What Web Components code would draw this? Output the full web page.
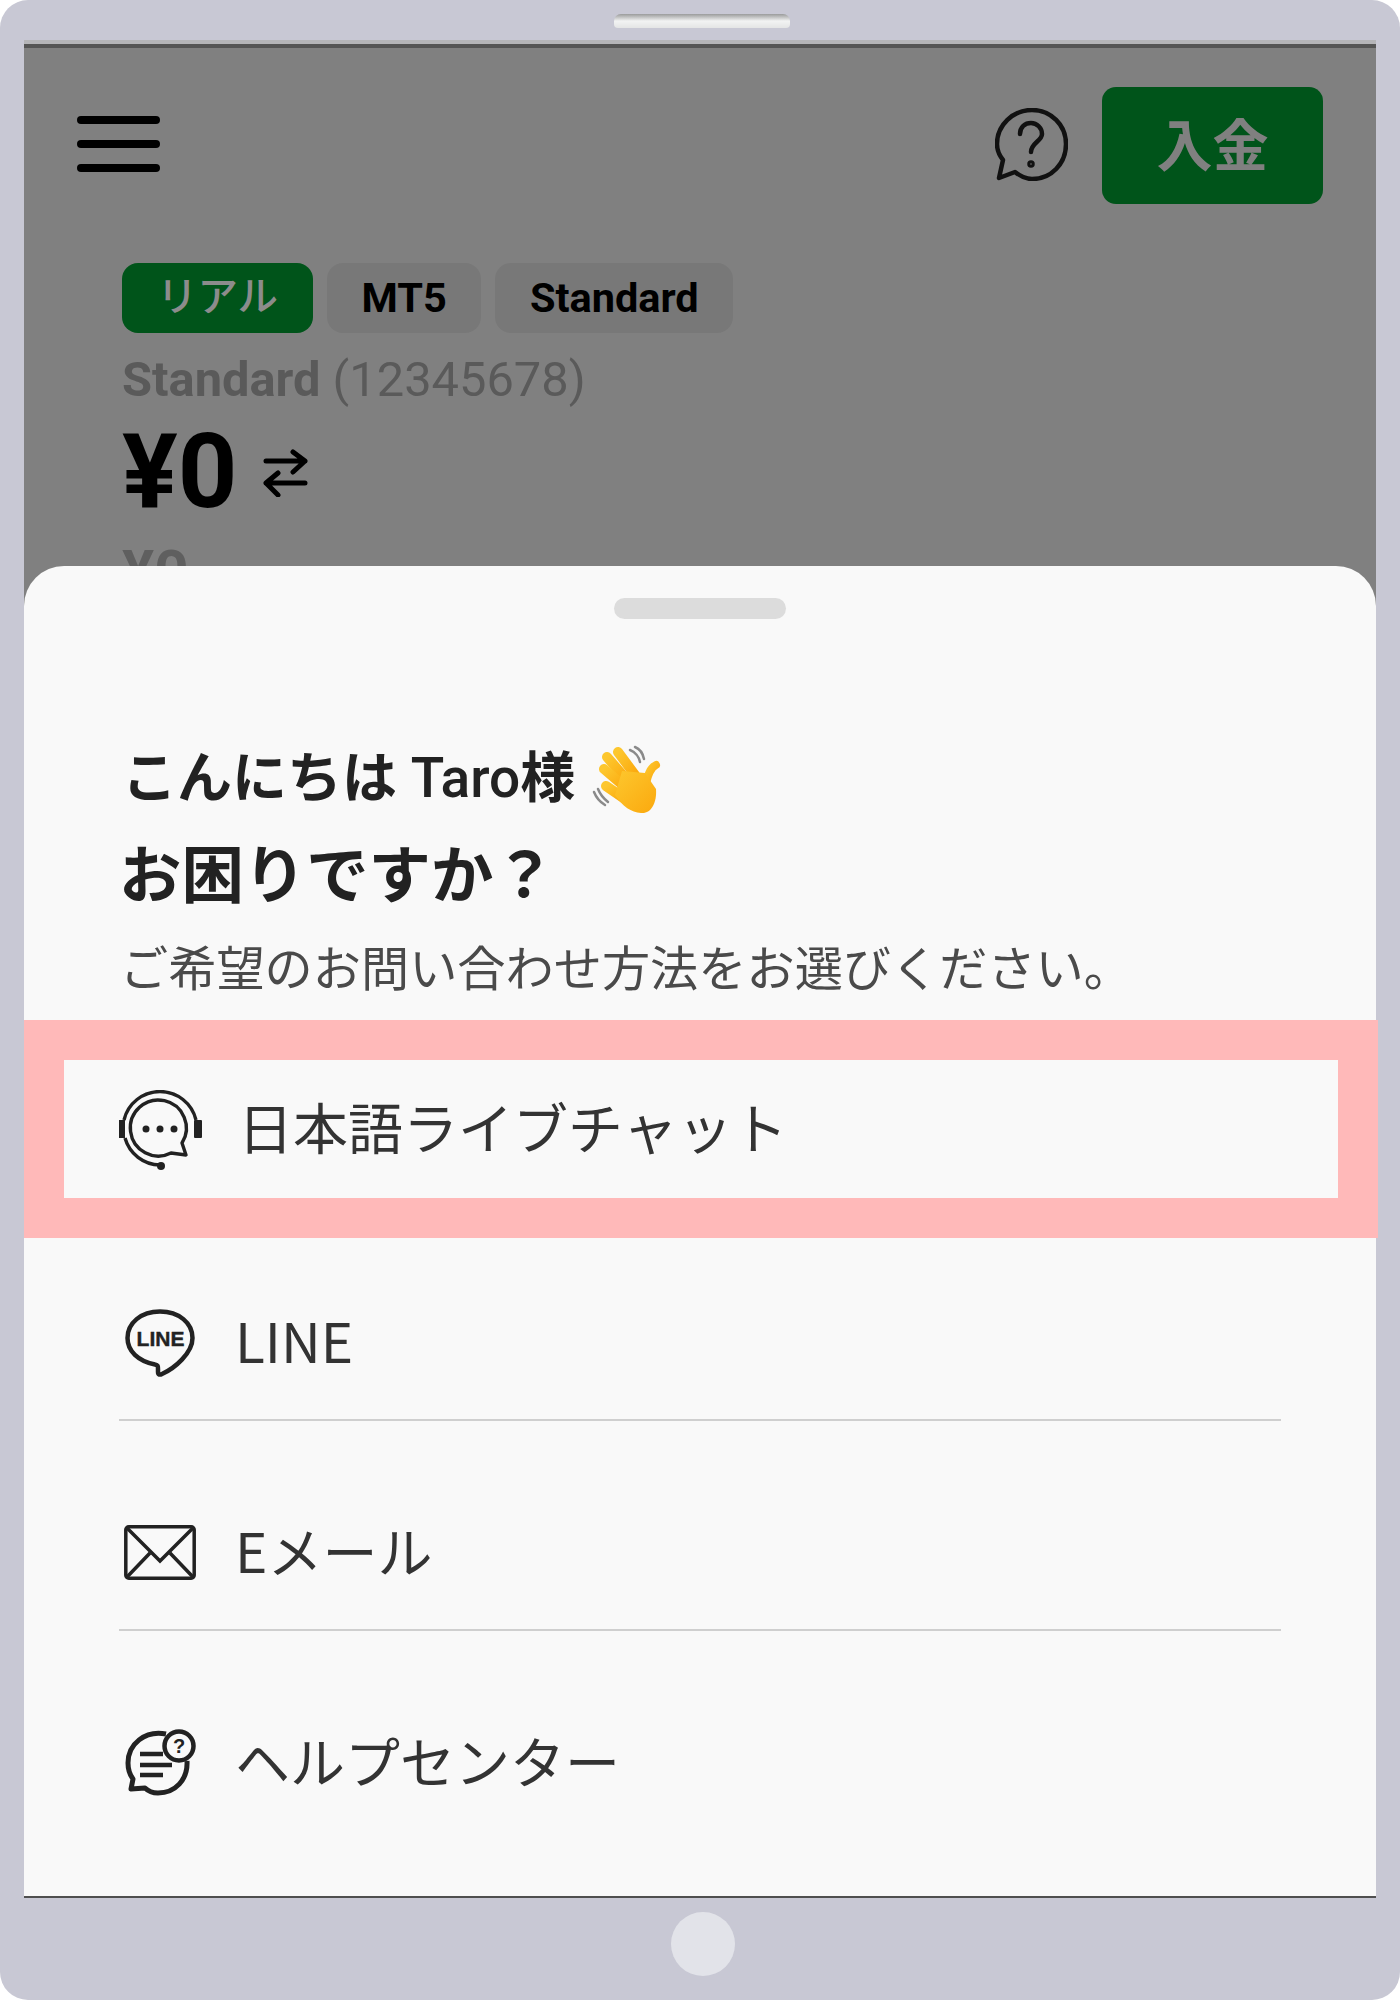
<!DOCTYPE html>
<html lang="ja">
<head>
<meta charset="utf-8">
<title>Support sheet</title>
<style>
  html, body { margin: 0; padding: 0; background: #fff; }
  body { font-family: "Noto Sans CJK JP", "Noto Sans", sans-serif; }
</style>
</head>
<body>
<device-frame>
  <account-panel slot="back"></account-panel>
  <support-sheet slot="front">
    <contact-row slot="rows" boxed label="日本語ライブチャット" icon="chat"></contact-row>
    <contact-row slot="rows" first label="LINE" icon="line"></contact-row>
    <contact-row slot="rows" label="Eメール" icon="mail"></contact-row>
    <contact-row slot="rows" plain label="ヘルプセンター" icon="help"></contact-row>
  </support-sheet>
</device-frame>

<script>
const ICONS = {
  chat: `<svg style="margin-top:2px" width="84" height="80" viewBox="0 0 84 80" fill="none" stroke="#222" stroke-width="3.400">
      <path d="M5 30A37 37 0 0 1 77 30"/>
      <path d="M6 48A37 37 0 0 0 41 75"/>
      <rect x="0" y="30" width="6" height="18" fill="#222" stroke="none"/>
      <rect x="75" y="30" width="8" height="18" rx="1" fill="#222" stroke="none"/>
      <circle cx="42" cy="76" r="4" fill="#222" stroke="none"/>
      <path d="M52 63A28 28 0 1 1 63 53L67 65Z" stroke-linejoin="round"/>
      <circle cx="27" cy="39" r="3.500" fill="#222" stroke="none"/>
      <circle cx="41" cy="39" r="3.500" fill="#222" stroke="none"/>
      <circle cx="55" cy="39" r="3.500" fill="#222" stroke="none"/>
    </svg>`,
  line: `<svg width="70" height="68" viewBox="0 0 70 68" fill="none" stroke="#222">
      <path d="M35 2.500C16 2.500 2.500 14 2.500 29C2.500 42 13 52 30 55.500C33 56 33 57 33 60L33 63C33 66 35 66 37 65C50 59 67.500 44 67.500 29C67.500 14 54 2.500 35 2.500Z" stroke-width="4.500" stroke-linejoin="round"/>
      <text x="35.500" y="37" text-anchor="middle" font-family="'Liberation Sans', sans-serif" font-weight="700" font-size="21" fill="#222" stroke="#222" stroke-width=".4">LINE</text>
    </svg>`,
  mail: `<svg style="margin-left:-1px" width="72" height="55" viewBox="0 0 72 55" fill="none" stroke="#222" stroke-width="3.500">
      <rect x="1.800" y="1.800" width="68.400" height="51.400" rx="3"/>
      <path d="M3 3L36 36L69 3"/>
      <path d="M3 52L26 28M69 52L46 28"/>
    </svg>`,
  help: `<svg width="72" height="68" viewBox="0 0 72 68" fill="none" stroke="#222" stroke-width="5" stroke-linejoin="round">
      <path d="M41 5C20 1 3 15 3 34C3 41 5 46 8 50L6 60L20 59C24 63 29 64 33 64C50 64 63 51 62 32"/>
      <circle cx="54" cy="17" r="14.500" stroke-width="4.500" fill="#f9f9f9"/>
      <path d="M15 25H38M15 36H47M15 46H38" stroke-width="4.500"/>
      <text x="54" y="24" text-anchor="middle" font-family="'Liberation Sans', sans-serif" font-weight="700" font-size="20" fill="#222" stroke="none">?</text>
    </svg>`
};

const frameTpl = document.createElement('template');
frameTpl.innerHTML = `
  <style>
    :host {
      display: block;
      width: 1400px;
      height: 2000px;
      box-sizing: border-box;
      padding: 40px 24px 0;
      background: #c8c8d4;
      border-radius: 28px;
      position: relative;
      overflow: hidden;
    }
    .notch {
      position: absolute;
      left: 614px;
      top: 14px;
      width: 176px;
      height: 14px;
      border-radius: 7px 7px 4px 4px;
      background: linear-gradient(#9a9b9b, #f2f3f3 50%, #e4e5e5);
    }
    .screen {
      height: 1858px;
      box-sizing: border-box;
      border-top: 4px solid #b5b5b8;
      border-bottom: 2px solid #4f4f4f;
      position: relative;
      background: #808080;
    }
    .screen::before {
      content: "";
      display: block;
      height: 4px;
      background: #555;
    }
    .home {
      position: absolute;
      left: 671px;
      top: 1912px;
      width: 64px;
      height: 64px;
      border-radius: 50%;
      background: #e2e3e9;
    }
  </style>
  <div class="notch"></div>
  <div class="screen">
    <slot name="back"></slot>
    <slot name="front"></slot>
  </div>
  <div class="home"></div>
`;
class DeviceFrame extends HTMLElement {
  constructor() {
    super();
    this.attachShadow({ mode: 'open' });
    this.shadowRoot.appendChild(frameTpl.content.cloneNode(true));
  }
}
customElements.define('device-frame', DeviceFrame);

const panelTpl = document.createElement('template');
panelTpl.innerHTML = `
  <style>
    :host {
      display: block;
      height: 518px;
      overflow: hidden;
      font-family: Roboto, "Noto Sans CJK JP", sans-serif;
      color: #000;
    }
    header {
      display: flex;
      align-items: center;
      padding: 39px 53px 0 53px;
      height: 117px;
    }
    .burger { display: flex; flex-direction: column; gap: 16px; width: 83px; margin-bottom: 3px; }
    .burger i { display: block; height: 8px; border-radius: 4px; background: #000; }
    .q { margin-left: auto; margin-right: 34px; margin-bottom: 3px; display: block; }
    .deposit {
      width: 221px;
      height: 117px;
      box-sizing: border-box;
      padding-bottom: 8px;
      border-radius: 14px;
      background: #00541a;
      color: #808080;
      font: 700 56px "Noto Sans CJK JP", sans-serif;
      display: flex;
      align-items: center;
      justify-content: center;
    }
    .body { padding: 59px 0 0 98px; }
    .chips { display: flex; gap: 14px; }
    .chip {
      height: 70px;
      box-sizing: border-box;
      padding: 0 34.5px 2px;
      border-radius: 16px;
      background: #787878;
      font-weight: 700;
      font-size: 41.5px;
      display: flex;
      align-items: center;
    }
    .chip.real {
      background: #00541a;
      color: #8c8c8c;
      font: 500 40.5px "Noto Sans CJK JP", sans-serif;
      padding: 0 35px 10px;
    }
    .name { margin-top: 19px; font-size: 48.8px; line-height: 56px; color: #5a5a5a; }
    .name b { font-weight: 700; }
    .balance { display: flex; align-items: center; gap: 26px; margin-top: 20px; height: 88px; }
    .balance span { font-size: 104px; font-weight: 700; line-height: 88px; }
    .balance svg { margin-top: 2px; }
    .sub { margin-top: 26px; font-size: 60px; font-weight: 700; line-height: 60px; color: #5f5f5f; }
  </style>
  <header>
    <div class="burger"><i></i><i></i><i></i></div>
    <svg class="q" width="73" height="73" viewBox="0 0 73 73" fill="none" stroke="#111" stroke-width="4.500" stroke-linecap="round" stroke-linejoin="round">
      <path d="M8 52L4 70L20 64C25 68 31 71 37 71C56 71 71 56 71 36C71 17 56 2 37 2C18 2 2 17 2 36C2 42 4 47 8 52Z"/>
      <path d="M25 26C25 19 30 15 36 15C42 15 47 20 47 26C47 33 36 35 36 44"/>
      <circle cx="36" cy="56" r="1.500"/>
    </svg>
    <div class="deposit">入金</div>
  </header>
  <div class="body">
    <div class="chips">
      <div class="chip real">リアル</div>
      <div class="chip">MT5</div>
      <div class="chip">Standard</div>
    </div>
    <div class="name"><b>Standard</b> (12345678)</div>
    <div class="balance">
      <span>¥0</span>
      <svg width="46" height="48" viewBox="0 0 46 48" fill="none" stroke="#000" stroke-width="5" stroke-linecap="round" stroke-linejoin="round">
        <path d="M3 12H42M30 3L42 12L30 23"/>
        <path d="M42 34H3M15 24L3 34L15 46"/>
      </svg>
    </div>
    <div class="sub">¥0</div>
  </div>
`;
class AccountPanel extends HTMLElement {
  constructor() {
    super();
    this.attachShadow({ mode: 'open' });
    this.shadowRoot.appendChild(panelTpl.content.cloneNode(true));
  }
}
customElements.define('account-panel', AccountPanel);

const sheetTpl = document.createElement('template');
sheetTpl.innerHTML = `
  <style>
    :host {
      display: block;
      height: 1330px;
      background: #f9f9f9;
      border-radius: 40px 40px 0 0;
      color: #222;
      font-family: "Noto Sans CJK JP", sans-serif;
    }
    .handle { width: 172px; height: 21px; margin: 0 auto; position: relative; top: 32px; border-radius: 11px; background: #dcdcdc; }
    .intro { padding: 159px 0 0 98px; height: 433px; box-sizing: border-box; }
    .hello { display: flex; align-items: center; height: 64px; font: 500 55px/64px Roboto, "Noto Sans CJK JP", sans-serif; }
    .hello span { white-space: pre; }
    .hello b { font-weight: 700; }
    .hello svg { margin: 3px 0 0 10px; flex: none; }
    h2 { margin: 25px 0 0 -3px; font: 700 62.4px/72px "Noto Sans CJK JP", sans-serif; }
    p { margin: 28px 0 0 -2px; font: 400 48.2px/60px "Noto Sans CJK JP", sans-serif; color: #4a4a4a; white-space: nowrap; }
  </style>
  <div class="handle"></div>
  <div class="intro">
    <div class="hello"><span><b>こんにちは</b> Taro<b>様</b></span>
      <svg width="85" height="85" viewBox="0 0 85 85">
        <defs>
          <linearGradient id="hand" x1="0" y1="0" x2="1" y2="1">
            <stop offset="0" stop-color="#fdc72e"/>
            <stop offset="1" stop-color="#fba90e"/>
          </linearGradient>
        </defs>
        <g fill="none" stroke="#8a8a8a" stroke-width="2.500" stroke-linecap="round">
          <path d="M45 13C50 15 54 20 55 25M50 10C55 12 58 17 59 22"/>
          <path d="M9 55C11 60 15 65 20 68M13 52C15 57 18 61 23 65"/>
        </g>
        <g fill="none" stroke="url(#hand)" stroke-width="10" stroke-linecap="round" stroke-linejoin="round">
          <path d="M33 15L50 38"/>
          <path d="M22 20L42 43"/>
          <path d="M19 32L40 50"/>
          <path d="M21 49L40 62"/>
          <path d="M71 28C65 31 63 38 61 46" stroke-width="8"/>
        </g>
        <path d="M37 34L60 36L71 52C72 66 66 77 56 76C46 75 38 70 30 58Z" fill="url(#hand)"/>
      </svg>
    </div>
    <h2>お困りですか？</h2>
    <p>ご希望のお問い合わせ方法をお選びください。</p>
  </div>
  <slot name="rows"></slot>
`;
class SupportSheet extends HTMLElement {
  constructor() {
    super();
    this.attachShadow({ mode: 'open' });
    this.shadowRoot.appendChild(sheetTpl.content.cloneNode(true));
  }
}
customElements.define('support-sheet', SupportSheet);

const rowTpl = document.createElement('template');
rowTpl.innerHTML = `
  <style>
    :host { display: block; }
    .row {
      display: flex;
      align-items: center;
      margin: 55px 95px 0;
      height: 155px;
      box-sizing: border-box;
      border-bottom: 2px solid #cfcfcf;
      font-size: 55px;
      color: #333;
    }
    .icon { width: 116px; display: flex; flex: none; padding-left: 6px; box-sizing: border-box; }
    .label { margin-bottom: 8px; }
    :host([first]) .row { margin-top: 28px; }
    :host([plain]) .row { border-bottom: 0; margin-top: 54px; }
    :host([boxed]) .row {
      margin: 0;
      height: 218px;
      width: 1354px;
      border: 40px solid #ffb9b9;
      padding-left: 55px;
    }
    :host([boxed]) .icon { width: 119px; padding-left: 0; }
  </style>
  <div class="row">
    <span class="icon"></span>
    <span class="label"></span>
  </div>
`;
class ContactRow extends HTMLElement {
  constructor() {
    super();
    this.attachShadow({ mode: 'open' });
    this.shadowRoot.appendChild(rowTpl.content.cloneNode(true));
  }
  connectedCallback() {
    this.shadowRoot.querySelector('.label').textContent = this.getAttribute('label');
    this.shadowRoot.querySelector('.icon').innerHTML = ICONS[this.getAttribute('icon')] || '';
  }
}
customElements.define('contact-row', ContactRow);
</script>
</body>
</html>
